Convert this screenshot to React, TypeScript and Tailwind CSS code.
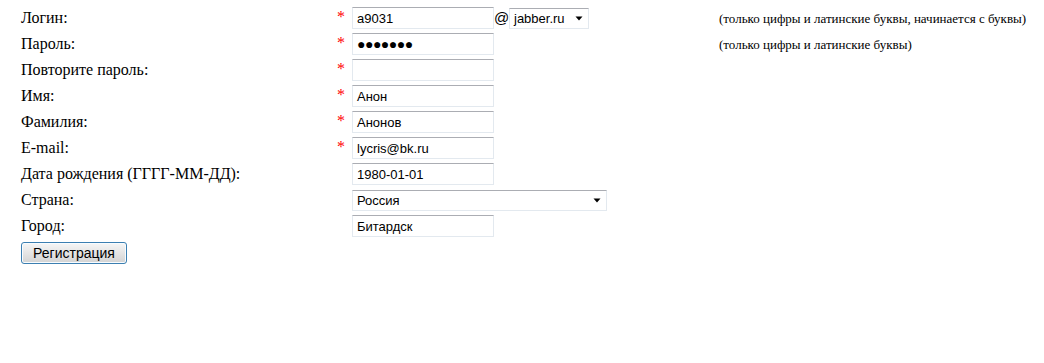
import React from "react";

const serif = { fontFamily: '"Liberation Serif", "Times New Roman", serif' };
const sans = { fontFamily: '"Liberation Sans", Arial, sans-serif' };

function Arrow() {
  return (
    <svg width="8" height="5" viewBox="0 0 8 5" className="shrink-0">
      <path d="M0.5 0.5 L7.5 0.5 L4 4.5 Z" fill="#000" />
    </svg>
  );
}

function Input({ value, password }: { value?: string; password?: boolean }) {
  return (
    <div
      className="w-[142px] h-[22px] border border-[#e3e9ef] border-t-[#abadb3] bg-white flex items-center pl-[4px] text-[13px] text-black leading-none"
      style={sans}
    >
      {password ? (
        <span className="text-[14px] tracking-[-0.5px] text-black">●●●●●●●</span>
      ) : (
        value
      )}
    </div>
  );
}

function Select({ value, width }: { value: string; width: string }) {
  return (
    <div
      className={`${width} h-[21px] border border-[#e3e9ef] border-t-[#abadb3] bg-white flex items-center justify-between pl-[4px] pr-[5px] text-[13px] text-black leading-none`}
      style={sans}
    >
      <span>{value}</span>
      <Arrow />
    </div>
  );
}

function Star({ show }: { show: boolean }) {
  return (
    <div className="w-[17px] pl-[2px] text-[16px] text-[#ff0000] self-start pt-[4px] leading-none" style={serif}>
      {show ? "*" : ""}
    </div>
  );
}

type Row = { label: string; star: boolean; field: React.ReactNode; hint?: string };

export default function App() {
  const rows: Row[] = [
    {
      label: "Логин:",
      star: true,
      field: (
        <div className="flex items-center">
          <Input value="a9031" />
          <span className="w-[15px] text-center text-[15px] text-black" style={sans}>@</span>
          <Select value="jabber.ru" width="w-[80px]" />
        </div>
      ),
      hint: "(только цифры и латинские буквы, начинается с буквы)",
    },
    { label: "Пароль:", star: true, field: <Input password />, hint: "(только цифры и латинские буквы)" },
    { label: "Повторите пароль:", star: true, field: <Input value="" /> },
    { label: "Имя:", star: true, field: <Input value="Анон" /> },
    { label: "Фамилия:", star: true, field: <Input value="Анонов" /> },
    { label: "E-mail:", star: true, field: <Input value="lycris@bk.ru" /> },
    { label: "Дата рождения (ГГГГ-ММ-ДД):", star: false, field: <Input value="1980-01-01" /> },
    { label: "Страна:", star: false, field: <Select value="Россия" width="w-[255px]" /> },
    { label: "Город:", star: false, field: <Input value="Битардск" /> },
  ];

  return (
    <div className="w-[1044px] h-[363px] bg-white pt-[5px] pl-[21px]">
      {rows.map((r) => (
        <div key={r.label} className="flex items-center h-[26px]">
          <div className="w-[314px] text-[16px] text-black leading-none" style={serif}>
            {r.label}
          </div>
          <div className="h-full flex">
            <Star show={r.star} />
          </div>
          <div className="w-[367px]">{r.field}</div>
          <div className="text-[13px] text-black leading-none" style={serif}>
            {r.hint}
          </div>
        </div>
      ))}
      <div className="pt-[1px]">
        <button
          className="w-[106px] h-[22px] rounded-[3px] border border-[#3c7fb1] bg-gradient-to-b from-[#f6f6f6] via-[#e5e5e5] to-[#d3d3d3] text-[14px] text-black leading-none shadow-[inset_0_0_0_1px_#f8fcff]"
          style={sans}
        >
          Регистрация
        </button>
      </div>
    </div>
  );
}
